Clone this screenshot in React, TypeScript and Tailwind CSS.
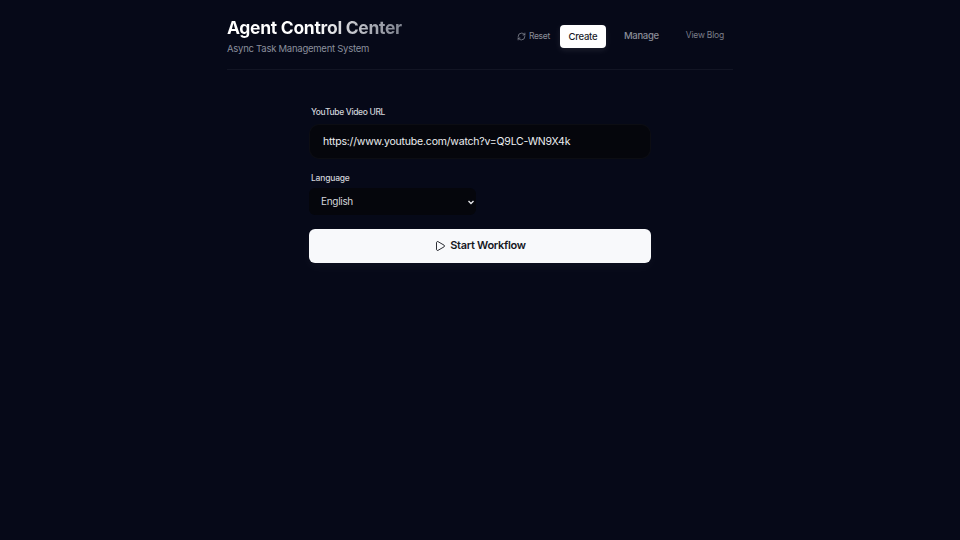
import { Play, RefreshCw } from 'lucide-react';

export default function App() {
  return (
    <div className="min-h-screen bg-[#060918] font-['Inter',sans-serif]">
      <div className="w-[506px] ml-[227px]">
        <header className="flex justify-between h-[70px] border-b border-white/[0.05]">
          <div className="pt-[17px]">
            <h1 className="w-fit text-[17.5px] leading-[22px] font-bold tracking-[-0.3px] text-transparent bg-clip-text bg-gradient-to-r from-white via-white to-[#7f838f] whitespace-nowrap">
              Agent Control Center
            </h1>
            <p className="mt-[2px] text-[9.5px] leading-[15px] tracking-[-0.25px] text-[#8a8f9c]">Async Task Management System</p>
          </div>
          <nav className="flex items-start pt-[25px] pr-[9px]">
            <button className="flex items-center gap-[3px] h-[22px] text-[8.5px] tracking-[-0.3px] text-[#8a8d98]">
              <RefreshCw size={9} strokeWidth={2} />
              Reset
            </button>
            <button className="ml-[10px] w-[46px] h-[23px] pt-[1px] rounded-[4px] bg-white text-[9.5px] tracking-[-0.25px] font-medium text-[#16181f] shadow-[0_2px_6px_rgba(255,255,255,0.1)]">
              Create
            </button>
            <button className="ml-[18px] h-[22px] pt-[1px] text-[9.5px] tracking-[-0.3px] font-medium text-[#8a8d98]">Manage</button>
            <a className="ml-[27px] h-[22px] text-[8.5px] leading-[20px] tracking-[-0.2px] text-[#7b7e8a]">View Blog</a>
          </nav>
        </header>
      </div>

      <main className="mx-auto w-[342px] pt-[36px]">
        <label className="block pl-[2px] text-[8.5px] leading-[12px] tracking-[-0.35px] font-medium text-[#d0d2d8]">YouTube Video URL</label>
        <div className="mt-[6px] flex items-center h-[35px] px-[13px] rounded-[10px] bg-[#05060c] border border-white/[0.03] text-[10.5px] tracking-[-0.2px] text-[#eceef1]">
          https://www.youtube.com/watch?v=Q9LC-WN9X4k
        </div>
        <label className="block mt-[13px] pl-[2px] text-[8.5px] leading-[12px] tracking-[-0.2px] font-medium text-[#d0d2d8]">Language</label>
        <div className="mt-[4px] flex items-center justify-between w-[167px] h-[27px] pl-[12px] pr-[1px] rounded-[6px] bg-[#05060c] text-[10px] tracking-[-0.3px] text-[#d4d6db]">
          English
          <svg width="8" height="8" viewBox="0 0 8 8" fill="none" stroke="#e4e5e9" strokeWidth="1.4">
            <path d="M1.5 3 L4 5.5 L6.5 3" />
          </svg>
        </div>
        <button className="mt-[14px] flex items-center justify-center gap-[4px] w-full h-[34px] pb-[1px] rounded-[6px] bg-[#f8f9fb] text-[11px] tracking-[-0.3px] font-semibold text-[#15171e] shadow-[0_4px_12px_rgba(255,255,255,0.04)]">
          <Play size={12} strokeWidth={1.8} />
          Start Workflow
        </button>
      </main>
    </div>
  );
}
